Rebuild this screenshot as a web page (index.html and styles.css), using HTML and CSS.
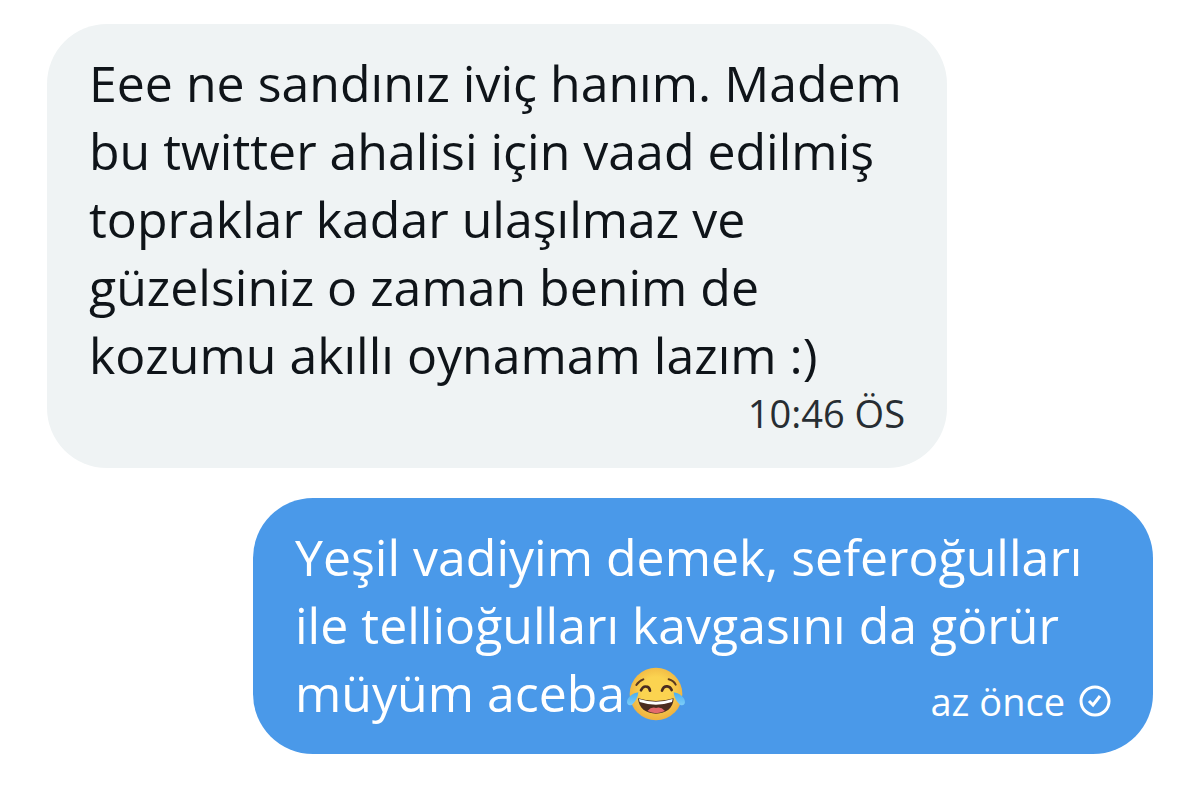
FILE: index.html
```html
<!DOCTYPE html>
<html lang="tr">
<head>
<meta charset="utf-8">
<meta name="viewport" content="width=device-width, initial-scale=1">
<title>Mesajlar</title>
<link rel="stylesheet" href="styles.css">
</head>
<body>
<main class="chat">
  <article class="bubble received">
    <p class="text">Eee ne sandınız iviç hanım. Madem<br>bu twitter ahalisi için vaad edilmiş<br>topraklar kadar ulaşılmaz ve<br>güzelsiniz o zaman benim de<br>kozumu akıllı oynamam lazım :)</p>
    <div class="meta"><time>10:46 ÖS</time></div>
  </article>
  <article class="bubble sent">
    <p class="text">Yeşil vadiyim demek, seferoğulları<br>ile tellioğulları kavgasını da görür</p>
    <div class="last">
      <p class="text">müyüm aceba<svg class="emoji" viewBox="0 0 180 168" role="img" aria-label="Sevinç gözyaşları">
        <defs>
          <radialGradient id="face" cx="50%" cy="45%" r="55%"><stop offset="0.5" stop-color="#fbd350"/><stop offset="1" stop-color="#eeb040"/></radialGradient>
          <linearGradient id="tear" x1="0" y1="0" x2="0" y2="1"><stop offset="0" stop-color="#4baef0"/><stop offset="1" stop-color="#7ccdf8"/></linearGradient>
        </defs>
        <circle cx="90" cy="84" r="79" fill="url(#face)"/>
        <path d="M36 97Q90 113 143 97C142 127 120 143 90 143S38 127 36 97Z" fill="#4a2c20"/>
        <path d="M39 99Q90 115 140 99L138 108Q90 124 41 108Z" fill="#fff"/>
        <path d="M64 135Q77 121 90 126Q104 121 117 135Q90 148 64 135Z" fill="#e46a6c"/>
        <path d="M45 73Q51 59 62 62Q70 63 72 74M108 74Q112 60 124 61Q133 62 137 72" fill="none" stroke="#4a2c20" stroke-width="8" stroke-linecap="round"/>
        <path d="M31 57Q38 45 52 40M128 40Q143 44 149 56" fill="none" stroke="#5c3b20" stroke-width="6" stroke-linecap="round"/>
        <path d="M37 79C22 81 3 93 3 109C4 119 15 120 21 113C30 104 36 92 37 79ZM143 79C158 81 177 93 177 109C176 119 165 120 159 113C150 104 144 92 143 79Z" fill="url(#tear)"/>
      </svg></p>
      <div class="meta"><time>az önce</time><svg class="check" viewBox="0 0 32 32" role="img" aria-label="Gönderildi"><circle cx="16" cy="16" r="14"/><path d="M10 16L14 20L21 11"/></svg></div>
    </div>
  </article>
</main>
</body>
</html>
```
FILE: styles.css
```css
* { box-sizing: border-box; }
body {
  margin: 0;
  background: #fff;
  font-family: "Open Sans", "Noto Sans", sans-serif;
}
.chat {
  display: flex;
  flex-direction: column;
  gap: 30px;
  padding: 24px 47px;
}
.bubble {
  width: 900px;
  max-width: 100%;
  border-radius: 60px;
  padding: 25px 42px 27px;
}
.received { align-self: flex-start; background: #eff3f4; color: #0f1419; padding-bottom: 32px; }
.sent { align-self: flex-end; background: #4a99e9; color: #fff; }
.text { margin: 0; font-size: 50px; line-height: 68px; white-space: nowrap; }
.meta { display: flex; align-items: center; justify-content: flex-end; gap: 14px; font-size: 38px; line-height: 46px; }
.received .meta { color: #272d32; padding-top: 1px; }
.last { display: flex; align-items: center; justify-content: space-between; }
.last .meta { padding-top: 16px; }
.emoji { width: 60px; height: 56px; vertical-align: -10px; margin-left: 1px; }
.check { width: 32px; height: 32px; fill: none; stroke: #fff; stroke-width: 3; }
```
